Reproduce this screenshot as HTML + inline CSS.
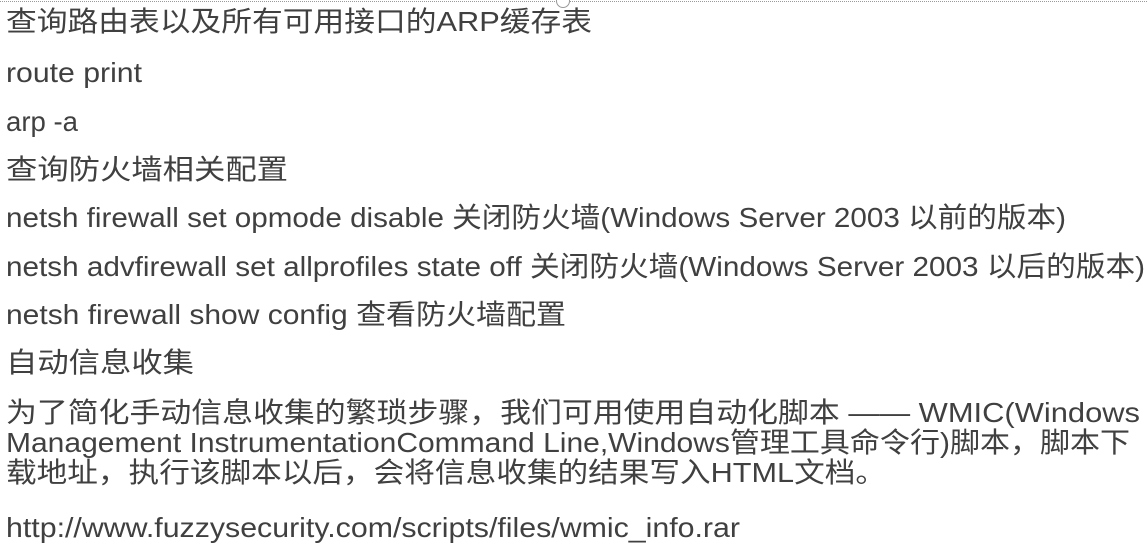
<!DOCTYPE html>
<html><head><meta charset="utf-8">
<style>
html,body{margin:0;padding:0;background:#fff;width:1147px;height:545px;overflow:hidden;position:relative}
.l{position:absolute;left:6px;white-space:nowrap;color:#404040;font-family:"Liberation Sans","Noto Sans CJK SC",sans-serif;font-size:28px;line-height:34px;transform-origin:0 50%}
.top{position:absolute;left:0;top:1px;width:1147px;border-top:1px dotted #999}
.c{position:absolute;left:556px;top:-6px;width:12px;height:12px;border:1px solid #999;border-radius:50%;background:#fff}
</style></head><body>
<div class="top"></div><div class="c"></div>
<div class="l" data-w="586" style="top:5px">查询路由表以及所有可用接口的ARP缓存表</div>
<div class="l" data-w="136" style="top:56px">route print</div>
<div class="l" data-w="72" style="top:105px">arp -a</div>
<div class="l" data-w="282" style="top:153px">查询防火墙相关配置</div>
<div class="l" data-w="1060" style="top:201px">netsh firewall set opmode disable 关闭防火墙(Windows Server 2003 以前的版本)</div>
<div class="l" data-w="1139" style="top:250px">netsh advfirewall set allprofiles state off 关闭防火墙(Windows Server 2003 以后的版本)</div>
<div class="l" data-w="560" style="top:298px">netsh firewall show config 查看防火墙配置</div>
<div class="l" data-w="188" style="top:346px">自动信息收集</div>
<div class="l" data-w="1134" style="top:396px">为了简化手动信息收集的繁琐步骤，我们可用使用自动化脚本 —— WMIC(Windows</div>
<div class="l" data-w="1124" style="top:426px">Management InstrumentationCommand Line,Windows管理工具命令行)脚本，脚本下</div>
<div class="l" data-w="880" style="top:456px">载地址，执行该脚本以后，会将信息收集的结果写入HTML文档。</div>
<div class="l" data-w="734" style="top:511px">http://www.fuzzysecurity.com/scripts/files/wmic_info.rar</div>
<script>
document.querySelectorAll('.l').forEach(function(e){
  var w=e.getBoundingClientRect().width, t=+e.getAttribute('data-w');
  if(w>0) e.style.transform='scaleX('+(t/w)+')';
});
</script>
</body></html>
